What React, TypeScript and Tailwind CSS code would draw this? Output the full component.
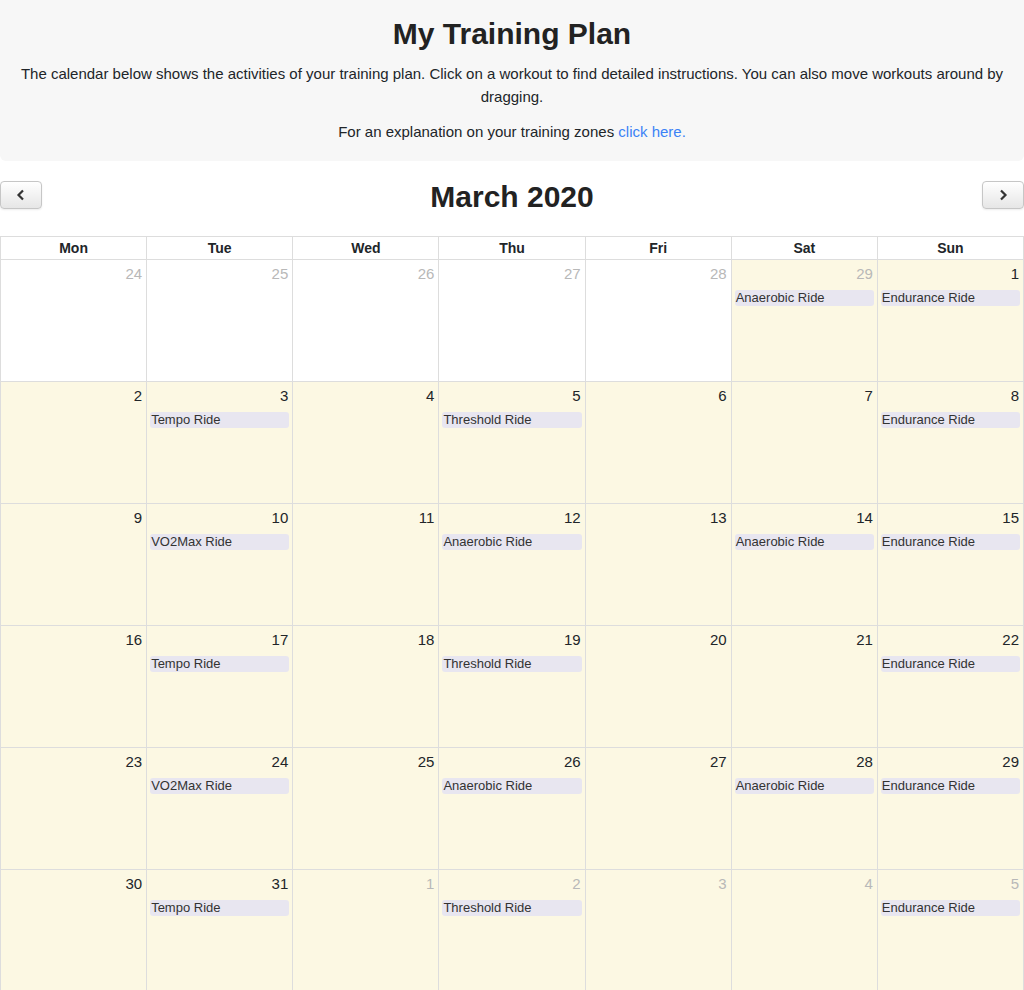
import React from "react";

type Day = { n: number; other?: boolean; hl?: boolean; ev?: string };

const weekdays = ["Mon", "Tue", "Wed", "Thu", "Fri", "Sat", "Sun"];

// workouts for March 2020
const events: Record<string, string> = {
  "f29": "Anaerobic Ride",
  "1": "Endurance Ride",
  "3": "Tempo Ride",
  "5": "Threshold Ride",
  "8": "Endurance Ride",
  "10": "VO2Max Ride",
  "12": "Anaerobic Ride",
  "14": "Anaerobic Ride",
  "15": "Endurance Ride",
  "17": "Tempo Ride",
  "19": "Threshold Ride",
  "22": "Endurance Ride",
  "24": "VO2Max Ride",
  "26": "Anaerobic Ride",
  "28": "Anaerobic Ride",
  "29": "Endurance Ride",
  "31": "Tempo Ride",
  "a2": "Threshold Ride",
  "a5": "Endurance Ride",
};

function buildDays(): Day[] {
  const days: Day[] = [];
  for (let d = 24; d <= 29; d++) {
    days.push({ n: d, other: true, hl: d === 29, ev: d === 29 ? events["f29"] : undefined });
  }
  for (let d = 1; d <= 31; d++) {
    days.push({ n: d, hl: true, ev: events[String(d)] });
  }
  for (let d = 1; d <= 5; d++) {
    days.push({ n: d, other: true, hl: true, ev: events["a" + d] });
  }
  return days;
}

function Cell({ day }: { day: Day }) {
  return (
    <div
      className={`h-[122px] border-r border-b border-[#ddd] ${
        day.hl ? "bg-[#fcf8e3]" : "bg-white"
      }`}
    >
      <div
        className={`pt-[5px] pr-[4px] text-right text-[15px] leading-[18px] ${
          day.other ? "text-[#b8b8b8]" : "text-[#212529]"
        }`}
      >
        {day.n}
      </div>
      {day.ev && (
        <div className="mx-[3px] mt-[7px] h-[16px] truncate rounded-[3px] bg-[#e8e6f0] pl-[1px] text-[13px] leading-[16px] text-[#333]">
          {day.ev}
        </div>
      )}
    </div>
  );
}

function NavButton({ dir }: { dir: "prev" | "next" }) {
  return (
    <button className="flex h-[28px] w-[42px] items-center justify-center rounded-[4px] border border-[#c6c6c6] bg-gradient-to-b from-white to-[#e6e6e6] shadow-[0_1px_2px_rgba(0,0,0,0.08)]">
      <svg width="10" height="12" viewBox="0 0 10 12">
        {dir === "prev" ? (
          <path d="M7 1.5 L2.5 6 L7 10.5" fill="none" stroke="#333" strokeWidth="2.2" />
        ) : (
          <path d="M3 1.5 L7.5 6 L3 10.5" fill="none" stroke="#333" strokeWidth="2.2" />
        )}
      </svg>
    </button>
  );
}

export default function App() {
  const days = buildDays();

  return (
    <div className="min-h-[990px] overflow-hidden bg-white font-['Liberation_Sans',Arial,sans-serif] text-[#212529]">
      {/* intro */}
      <div className="rounded-b-[6px] bg-[#f7f7f7] px-4 pt-[16px] pb-[18px] text-center">
        <h1 className="mb-[10px] text-[30px] leading-[36px] font-bold text-[#222]">My Training Plan</h1>
        <p className="mb-[12px] text-[15px] leading-[23px]">
          The calendar below shows the activities of your training plan. Click on a workout to find detailed
          instructions. You can also move workouts around by dragging.
        </p>
        <p className="text-[15px] leading-[23px]">
          For an explanation on your training zones <a className="text-[#3b82f6]">click here.</a>
        </p>
      </div>

      {/* toolbar */}
      <div className="mt-[19px] mb-[26px] flex h-[30px] items-center justify-between">
        <NavButton dir="prev" />
        <h2 className="pt-[4px] text-[30px] leading-[30px] font-bold text-[#222]">March 2020</h2>
        <NavButton dir="next" />
      </div>

      {/* calendar grid */}
      <div className="border-t border-l border-[#ddd]">
        <div className="grid grid-cols-7">
          {weekdays.map((w) => (
            <div
              key={w}
              className="h-[23px] border-r border-b border-[#ddd] text-center text-[14px] leading-[22px] font-bold"
            >
              {w}
            </div>
          ))}
        </div>
        <div className="grid grid-cols-7">
          {days.map((d, i) => (
            <Cell key={i} day={d} />
          ))}
        </div>
      </div>
    </div>
  );
}
